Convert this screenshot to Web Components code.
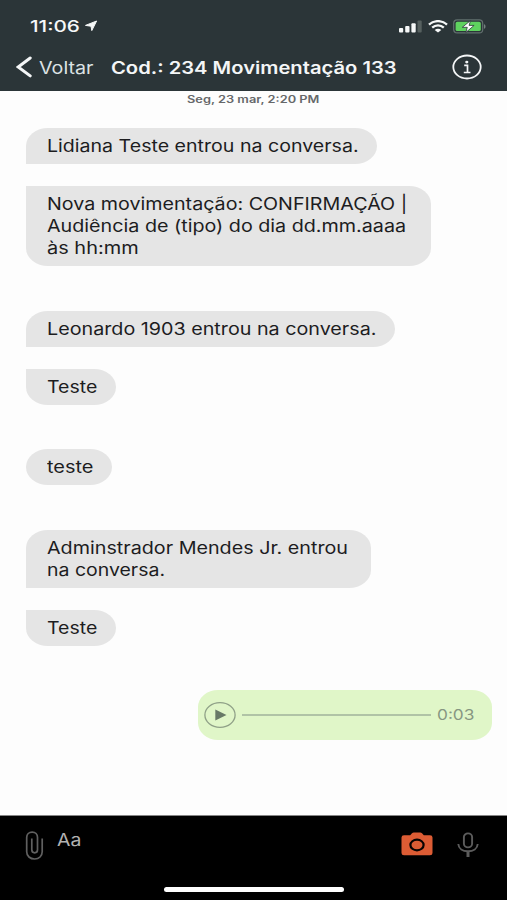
<!DOCTYPE html>
<html lang="pt-BR">
<head>
<meta charset="utf-8">
<meta name="viewport" content="width=device-width, initial-scale=1">
<title>Conversa</title>
<style>
  html, body { margin: 0; height: 100%; }
  body {
    overflow: hidden;
    background: #fdfdfd;
    font-family: Inter, "Liberation Sans", sans-serif;
  }
</style>
</head>
<body>
<chat-screen></chat-screen>

<script>
// One line of text, scaled horizontally so that it fills the given width.
class WideText extends HTMLElement {
  constructor() {
    super();
    this.attachShadow({ mode: 'open' });
  }

  connectedCallback() {
    this.shadowRoot.innerHTML = `
      <style>
        :host { display: block; flex: none; white-space: nowrap; }
        span { display: inline-block; transform-origin: 0 50%; vertical-align: top; }
      </style>
      <span><slot></slot></span>
    `;
    const width = Number(this.getAttribute('width'));
    const span = this.shadowRoot.querySelector('span');
    this.style.width = `${width}px`;
    span.style.transform = `scaleX(${width / span.offsetWidth})`;
  }
}

class StatusBar extends HTMLElement {
  constructor() {
    super();
    this.attachShadow({ mode: 'open' });
  }

  connectedCallback() {
    this.shadowRoot.innerHTML = `
      <style>
        :host {
          display: flex;
          align-items: center;
          height: 52px;
          padding: 0 20px 0 30px;
          box-sizing: border-box;
          color: #f6f8f8;
        }
        wide-text { font-size: 16px; font-weight: 500; line-height: 22px; }
        svg { display: block; flex: none; }
        .arrow { margin: 0 auto 0 3.5px; }
        .wifi { margin: 0 5px 0 6px; }
      </style>
      <wide-text width="50.5">11:06</wide-text>
      <svg class="arrow" width="14" height="12" viewBox="0 0 14 12"><path d="M12.6 1 7.8 10.6 7 6.200 1.500 5.400z" fill="currentColor" stroke="currentColor" stroke-width="1" stroke-linejoin="round"/></svg>
      <svg width="23" height="13" viewBox="0 0 23 13" fill="currentColor">
        <rect x="0" y="8" width="4.2" height="4.5" rx="1"/>
        <rect x="6.2" y="6" width="4.3" height="6.5" rx="1"/>
        <rect x="12.4" y="3.2" width="4.3" height="9.3" rx="1"/>
        <rect x="18.5" y="0.5" width="4.2" height="12" rx="1" fill="#56605f"/>
      </svg>
      <svg class="wifi" width="20" height="13" viewBox="0 0 20 13" fill="none" stroke="currentColor" stroke-width="2.3">
        <path d="M1 4.7C6-.1 14-.1 19 4.7"/>
        <path d="M4.2 7.6c3.3-3 8.3-3 11.6 0"/>
        <path d="M10 12.5 6.7 9.9c1.8-1.5 4.8-1.5 6.6 0z" fill="currentColor" stroke="none"/>
      </svg>
      <svg width="34" height="15" viewBox="0 0 34 15">
        <rect x=".7" y=".9" width="29" height="13" rx="3.5" fill="none" stroke="#62706e" stroke-width="1.2"/>
        <path d="M31 5.2c2 .5 2 4 0 4.5z" fill="#75807f"/>
        <rect x="2.6" y="2.7" width="25.2" height="9.4" rx="1.7" fill="#5fd25f"/>
        <path d="M17.6 1.5 9.3 8.3h5l-1.5 5.2 8.3-7.1h-5z" fill="#fff" stroke="#2b3538" stroke-width=".8"/>
      </svg>
    `;
  }
}

class NavBar extends HTMLElement {
  constructor() {
    super();
    this.attachShadow({ mode: 'open' });
  }

  connectedCallback() {
    this.shadowRoot.innerHTML = `
      <style>
        :host {
          display: flex;
          align-items: center;
          height: 30px;
          padding: 0 25px 0 16px;
          color: #f4f6f7;
          font-size: 17px;
          line-height: 24px;
        }
        svg { display: block; flex: none; }
        wide-text { margin-top: 2px; }
        .back { margin-right: 7px; }
        .label { color: #dce2e4; margin-right: 17.5px; }
        .title { font-weight: 600; }
        .info { margin-left: auto; }
      </style>
      <svg class="back" width="16" height="22" viewBox="0 0 16 22"><path d="M14.2 2 2.2 11l12 8.9" fill="none" stroke="currentColor" stroke-width="3" stroke-linecap="round"/></svg>
      <wide-text class="label" width="54.5">Voltar</wide-text>
      <wide-text class="title" width="286">Cod.: 234 Movimentação 133</wide-text>
      <svg class="info" width="30" height="26" viewBox="0 0 30 26">
        <ellipse cx="15" cy="13" rx="13.7" ry="11.5" fill="none" stroke="currentColor" stroke-width="1.8"/>
        <ellipse cx="14.8" cy="8.1" rx="1.6" ry="1.4" fill="currentColor"/>
        <path d="M12.2 11.3h3.3v7M11.8 18.5h6.7" fill="none" stroke="currentColor" stroke-width="1.7"/>
      </svg>
    `;
  }
}

class ChatBubble extends HTMLElement {
  constructor() {
    super();
    this.attachShadow({ mode: 'open' });
  }

  connectedCallback() {
    this.shadowRoot.innerHTML = `
      <style>
        :host {
          display: block;
          box-sizing: border-box;
          padding: 7px 0 7px 21.6px;
          border-radius: 22px / 18px;
          background: #e5e5e5;
          color: #1d1d1f;
          font-size: 17px;
          line-height: 22px;
        }
        :host([joint="bottom"]) { border-bottom-left-radius: 0; }
        :host([joint="top"]) { border-top-left-radius: 0; }
      </style>
      <slot></slot>
    `;
    this.style.width = `${this.getAttribute('width')}px`;
  }
}

// Messages from one sender, stacked with a small gap
class ChatGroup extends HTMLElement {
  constructor() {
    super();
    this.attachShadow({ mode: 'open' });
    this.shadowRoot.innerHTML = `
      <style>
        :host { display: flex; flex-direction: column; align-items: flex-start; gap: 22.2px; }
      </style>
      <slot></slot>
    `;
  }
}

class AudioBubble extends HTMLElement {
  constructor() {
    super();
    this.attachShadow({ mode: 'open' });
  }

  connectedCallback() {
    this.shadowRoot.innerHTML = `
      <style>
        :host {
          display: flex;
          align-items: center;
          align-self: flex-end;
          box-sizing: border-box;
          width: 293.5px;
          height: 49.5px;
          padding: 0 18px 0 5.5px;
          border-radius: 20px / 17px;
          background: #e0f6c8;
          color: #879682;
          font-size: 14px;
          line-height: 20px;
        }
        svg { display: block; flex: none; }
        .track { flex: 1; height: 2px; margin: 0 6px; background: #b0c3a6; }
      </style>
      <svg width="32" height="26" viewBox="0 0 32 26">
        <ellipse cx="16" cy="13" rx="15.1" ry="12.3" fill="none" stroke="#8fa087" stroke-width="1.3"/>
        <path d="M11.3 7.4v11.2L22.5 13z" fill="#687967"/>
      </svg>
      <div class="track"></div>
      <wide-text width="37">${this.getAttribute('duration')}</wide-text>
    `;
  }
}

class MessageBar extends HTMLElement {
  constructor() {
    super();
    this.attachShadow({ mode: 'open' });
  }

  connectedCallback() {
    this.shadowRoot.innerHTML = `
      <style>
        :host {
          display: flex;
          flex-direction: column;
          justify-content: space-between;
          align-items: center;
          box-sizing: border-box;
          height: 85px;
          padding-bottom: 8px;
          border-top: 1px solid #858585;
          background: #000;
        }
        .row {
          display: flex;
          align-items: flex-start;
          align-self: stretch;
          padding: 13px 28px 0 25px;
        }
        svg { display: block; flex: none; }
        .clip { margin: 1.5px 13px 0 0; }
        .hint { margin-right: auto; color: #b2b2b2; font-size: 17px; line-height: 22px; }
        .camera { margin: 2.5px 24px 0 0; }
        .mic { margin-top: 2.5px; }
        .home { width: 180px; height: 5.5px; border-radius: 3px; background: #fff; }
      </style>
      <div class="row">
        <svg class="clip" width="19" height="30" viewBox="0 0 19 30">
          <path d="M17.2 7.5v13.2c0 4.4-3.2 7.3-7.5 7.3-4.6 0-8-2.9-8-7.3V6.5C1.7 3.5 4 1.2 7.2 1.2s5.3 2.2 5.3 5.1v12.5c0 1.8-1 3-2.8 3s-2.9-1.2-2.9-3V7.5" fill="none" stroke="#606060" stroke-width="1.7"/>
        </svg>
        <wide-text class="hint" width="24">Aa</wide-text>
        <svg class="camera" width="32" height="24" viewBox="0 0 32 24">
          <path d="M3 3.3h6.2l1.8-2q.7-.8 1.8-.8h6.4q1.1 0 1.8.8l1.8 2H29q2.5 0 2.5 2.2v15.6q0 2.2-2.5 2.2H3q-2.5 0-2.5-2.2V5.5q0-2.2 2.5-2.2z" fill="#dc5c34"/>
          <ellipse cx="16" cy="13" rx="6.6" ry="5.3" fill="none" stroke="#070302" stroke-width="2.2"/>
        </svg>
        <svg class="mic" width="22" height="26" viewBox="0 0 22 26" fill="none" stroke="#5c5c5c" stroke-width="1.9">
          <rect x="6.9" y="1.4" width="8.2" height="14" rx="4.1" ry="3.6"/>
          <path d="M1.3 12c.3 4.7 4.5 7.2 9.7 7.2s9.4-2.5 9.7-7.2"/>
          <path d="M11 19.2V25" stroke-width="3"/>
        </svg>
      </div>
      <div class="home"></div>
    `;
  }
}

class ChatScreen extends HTMLElement {
  constructor() {
    super();
    this.attachShadow({ mode: 'open' });
  }

  connectedCallback() {
    this.shadowRoot.innerHTML = `
      <style>
        :host { display: flex; flex-direction: column; width: 507px; height: 900px; background: #fdfdfd; }
        header { height: 91px; flex: none; background: #2b3538; }
        main {
          flex: 1;
          display: flex;
          flex-direction: column;
          gap: 44.5px;
          padding: 0 15.3px 0 25.6px;
        }
        .date {
          align-self: center;
          margin: 1px 0 -22.7px -11px;
          color: #66686a;
          font-size: 10px;
          font-weight: 600;
          line-height: 14px;
        }
      </style>
      <header>
        <status-bar></status-bar>
        <nav-bar></nav-bar>
      </header>
      <main>
        <wide-text class="date" width="132">Seg, 23 mar, 2:20 PM</wide-text>
        <chat-group>
          <chat-bubble joint="bottom" width="351.9"><wide-text width="311">Lidiana Teste entrou na conversa.</wide-text></chat-bubble>
          <chat-bubble joint="top" width="405.4">
            <wide-text width="360">Nova movimentação: CONFIRMAÇÃO |</wide-text>
            <wide-text width="359.5">Audiência de (tipo) do dia dd.mm.aaaa</wide-text>
            <wide-text width="91.5">às hh:mm</wide-text>
          </chat-bubble>
        </chat-group>
        <chat-group>
          <chat-bubble joint="bottom" width="369.9"><wide-text width="329.5">Leonardo 1903 entrou na conversa.</wide-text></chat-bubble>
          <chat-bubble joint="top" width="90.4"><wide-text width="50.5">Teste</wide-text></chat-bubble>
        </chat-group>
        <chat-group>
          <chat-bubble width="86.9"><wide-text width="47">teste</wide-text></chat-bubble>
        </chat-group>
        <chat-group>
          <chat-bubble joint="bottom" width="345.4">
            <wide-text width="300.5">Adminstrador Mendes Jr. entrou</wide-text>
            <wide-text width="118">na conversa.</wide-text>
          </chat-bubble>
          <chat-bubble joint="top" width="90.4"><wide-text width="50.5">Teste</wide-text></chat-bubble>
        </chat-group>
        <audio-bubble duration="0:03"></audio-bubble>
      </main>
      <message-bar></message-bar>
    `;
  }
}

customElements.define('wide-text', WideText);
customElements.define('status-bar', StatusBar);
customElements.define('nav-bar', NavBar);
customElements.define('chat-bubble', ChatBubble);
customElements.define('chat-group', ChatGroup);
customElements.define('audio-bubble', AudioBubble);
customElements.define('message-bar', MessageBar);
customElements.define('chat-screen', ChatScreen);
</script>
</body>
</html>
